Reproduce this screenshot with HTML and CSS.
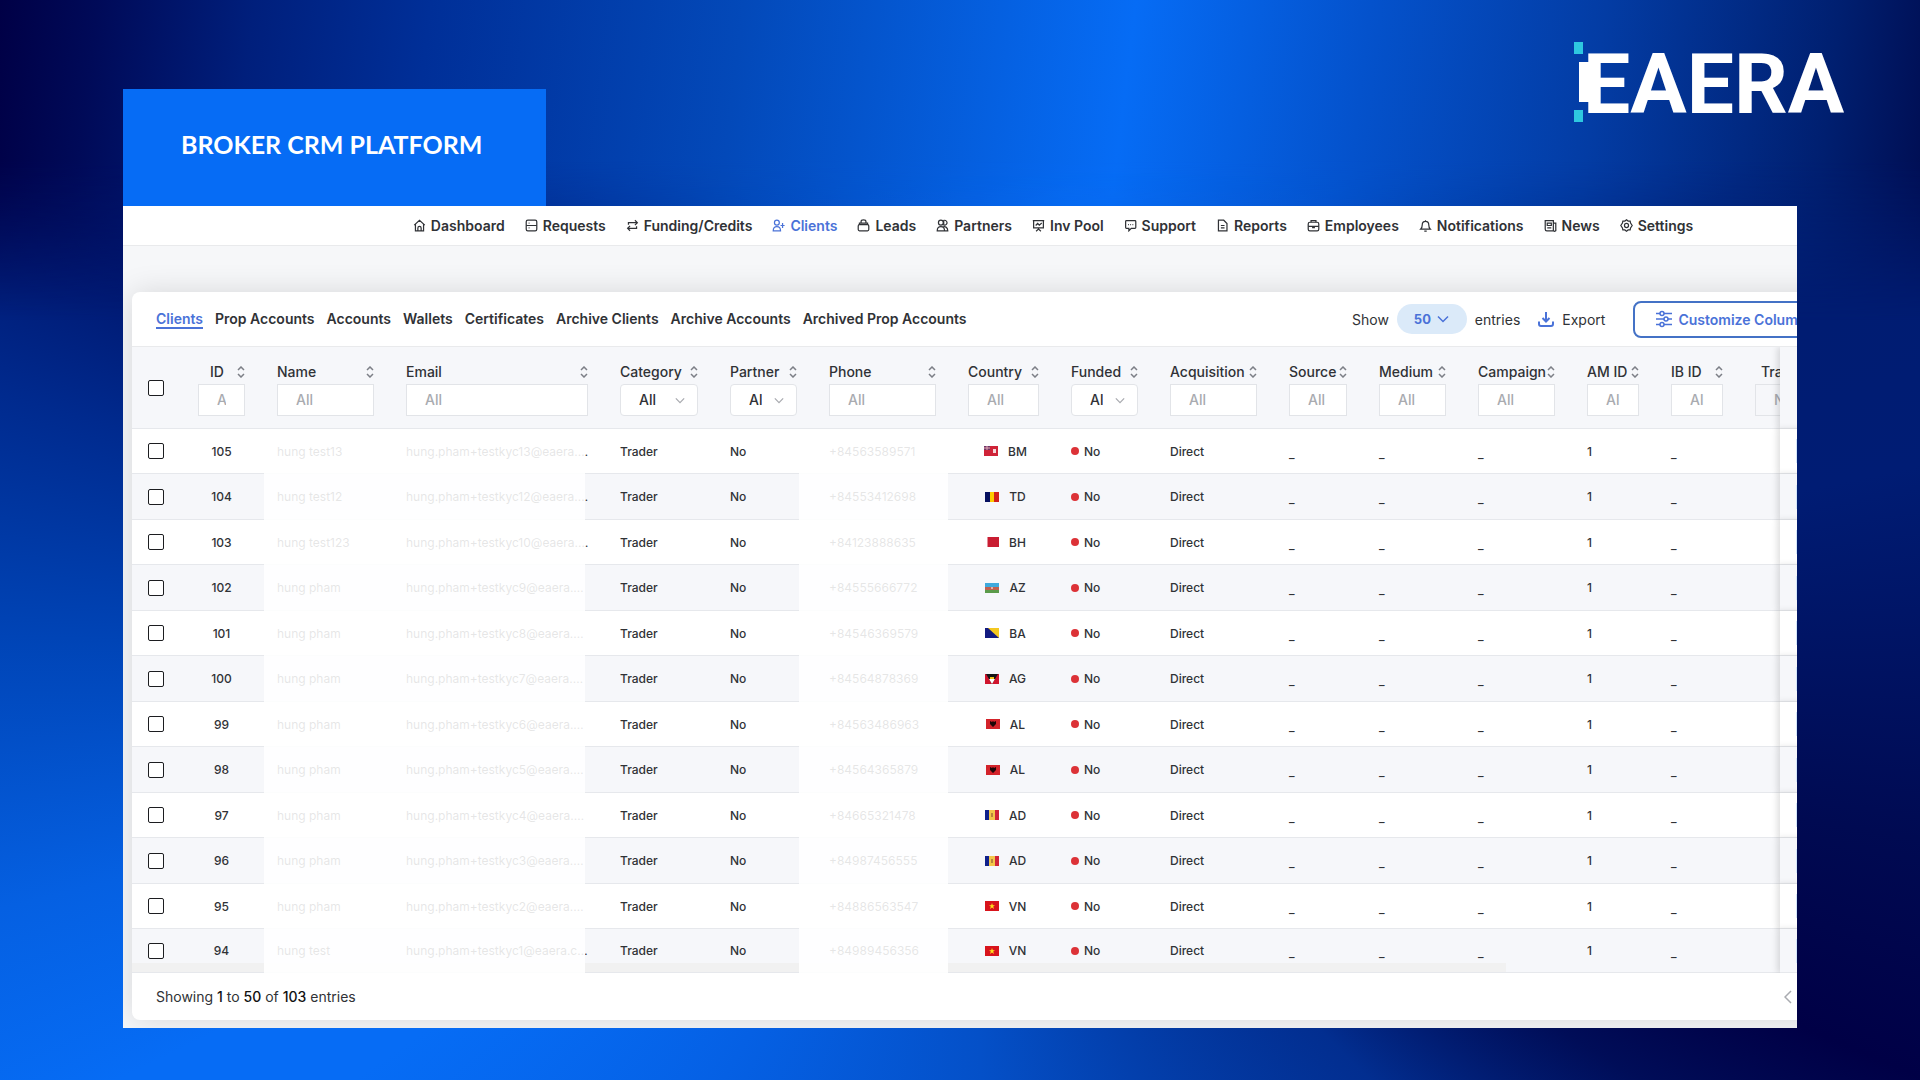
FILE: index.html
```html
<!DOCTYPE html>
<html lang="en">
<head>
    <meta charset="UTF-8">
    <meta name="viewport" content="width=device-width, initial-scale=1.0">
    <title>Broker CRM Platform</title>
    <link rel="stylesheet" href="styles.css">
</head>
<body>
    <!-- Icon sprite -->
    <svg class="sprite" aria-hidden="true">
        <symbol id="i-home" viewBox="0 0 16 16"><path d="M1.5 7.5 8 1.5l6.500 6M3 6.500v8h10v-8M6 14.500v-3.500a2 2 0 0 1 4 0v3.500"/></symbol>
        <symbol id="i-requests" viewBox="0 0 16 16"><rect x="1.500" y="1.500" width="13" height="13" rx="2"/><path d="M1.500 8h13M4.500 5h1M4.500 11h1"/></symbol>
        <symbol id="i-funding" viewBox="0 0 16 16"><path d="M3 7V4.500h11M11 1.500l3 3-3 3M13 9v2.500H2M5 8.500l-3 3 3 3"/></symbol>
        <symbol id="i-clients" viewBox="0 0 16 16"><circle cx="6" cy="4.500" r="3"/><path d="M6 9.500c-3 0-4.500 1.500-4.500 5h9c0-3.500-1.500-5-4.500-5zM13 5v6M10.500 8h5"/></symbol>
        <symbol id="i-leads" viewBox="0 0 16 16"><rect x="1.500" y="7" width="13" height="7.500" rx="1.500"/><path d="M3 7V5h10v2M5 5V3a3 2 0 0 1 6 0v2"/></symbol>
        <symbol id="i-partners" viewBox="0 0 16 16"><circle cx="6" cy="4.500" r="3"/><path d="M9 2a3 3 0 1 1 1 5.500M1.500 14.500c0-3 1.500-5 4.500-5s4.500 2 4.500 5zM8 10c3-1.500 6.500 0 6.500 4.500h-4M9.500 2v6"/></symbol>
        <symbol id="i-pool" viewBox="0 0 16 16"><path d="M1 2h14M2 2v9h12V2M8 11v2M5 15l3-2.500 3 2.500M4.500 8l2.500-2.500 2 2L12 5"/></symbol>
        <symbol id="i-support" viewBox="0 0 16 16"><path d="M3 2h10.500a1 1 0 0 1 1 1v7.500a1 1 0 0 1-1 1H9l-3 3v-3H3a1 1 0 0 1-1-1V3a1 1 0 0 1 1-1zM5 6.800h1M7.700 6.800h1M10.400 6.800h1"/></symbol>
        <symbol id="i-reports" viewBox="0 0 16 16"><path d="M3 1.500h6.500l4 4v9H3zM6 8h4.500M6 11h4.500"/></symbol>
        <symbol id="i-employees" viewBox="0 0 16 16"><rect x="1.500" y="4" width="13" height="10.500" rx="2"/><path d="M5 4V2h6v2M1.500 9h13M7 9v1.500h2V9"/></symbol>
        <symbol id="i-bell" viewBox="0 0 16 16"><path d="M2 12.500c2-2 2-3 2-5.500a4 4 0 0 1 8 0c0 2.500 0 3.500 2 5.500zM6.500 15h3M8 1.500V3"/></symbol>
        <symbol id="i-news" viewBox="0 0 16 16"><path d="M1.500 2h10v12.500h-8a2 2 0 0 1-2-2zM11.500 5h3v8a1.500 1.500 0 0 1-3 1M4 5h5v3H4zM4 11h5"/></symbol>
        <symbol id="i-settings" viewBox="0 0 16 16"><path d="M8 1l2 1.500 2.500 0 .500 2.500L15 8l-2 3-.500 2.500-2.500 0L8 15l-2-1.500-2.500 0L3 11 1 8l2-3 .500-2.500 2.500 0z"/><circle cx="8" cy="8" r="2.500"/></symbol>
        <symbol id="i-down" viewBox="0 0 12 8"><path d="M1 1.500l5 5 5-5"/></symbol>
        <symbol id="i-left" viewBox="0 0 8 14"><path d="M7 1L1 7l6 6"/></symbol>
        <symbol id="i-sort" viewBox="0 0 8 12"><path d="M1 4l3-3 3 3M1 8l3 3 3-3"/></symbol>
        <symbol id="i-export" viewBox="0 0 16 16"><path d="M8 1v9M4.500 7L8 10.500 11.500 7M1 10.500V13a2 2 0 0 0 2 2h10a2 2 0 0 0 2-2v-2.500"/></symbol>
        <symbol id="i-sliders" viewBox="0 0 18 18"><path d="M1 3.500h4M9 3.500h8M1 9h8M13 9h4M1 14.500h4M9 14.500h8"/><circle cx="7" cy="3.500" r="2"/><circle cx="11" cy="9" r="2"/><circle cx="7" cy="14.500" r="2"/></symbol>

        <!-- Flags -->
        <symbol id="f-BM" viewBox="0 0 14 10"><path fill="#cf2338" d="M0 0h14v10H0z"/><path fill="#6d3566" d="M0 0h6v4H0z"/><path stroke="#e8a9b4" stroke-width="1" d="M3 0v4M0 2h6"/><path fill="#f3d7da" d="M9 3h3v4H9z"/></symbol>
        <symbol id="f-TD" viewBox="0 0 14 10"><path fill="#06105f" d="M0 0h5v10H0z"/><path fill="#fecb00" d="M5 0h4v10H5z"/><path fill="#d2201c" d="M9 0h5v10H9z"/></symbol>
        <symbol id="f-BH" viewBox="0 0 14 10"><path fill="#c91d32" d="M2 0h12v10H2l1-1-1-1 1-1-1-1 1-1-1-1 1-1-1-1 1-1z"/></symbol>
        <symbol id="f-AZ" viewBox="0 0 14 10"><path fill="#3fa9dc" d="M0 0h14v4H0z"/><path fill="#c0604f" d="M0 4h14v3H0z"/><path fill="#5b9b4a" d="M0 7h14v3H0z"/><circle cx="7" cy="5" r="1" fill="#f2c9c0"/></symbol>
        <symbol id="f-BA" viewBox="0 0 14 10"><path fill="#121a80" d="M0 0h14v10H0z"/><path fill="#f4c820" d="M3 0h11v10z"/></symbol>
        <symbol id="f-AG" viewBox="0 0 14 10"><path fill="#d0152d" d="M0 0h14v10H0z"/><path fill="#151515" d="M1 0h12L7 10z"/><path fill="#fff" d="M4 5h6l-3 5z"/><path fill="#f0c419" d="M5 3h4v2H5z"/></symbol>
        <symbol id="f-AL" viewBox="0 0 14 10"><path fill="#d3232a" d="M0 0h14v10H0z"/><path fill="#1d0507" d="M4 2l2 1 1-1 1 1 2-1v3L7 8 4 5z"/></symbol>
        <symbol id="f-AD" viewBox="0 0 14 10"><path fill="#10218b" d="M0 0h4v10H0z"/><path fill="#f3c64a" d="M4 0h6v10H4z"/><path fill="#cf2338" d="M10 0h4v10h-4z"/><path fill="#b9853c" d="M6 3h2v4H6z"/></symbol>
        <symbol id="f-VN" viewBox="0 0 14 10"><path fill="#d8141c" d="M0 0h14v10H0z"/><path fill="#ffe21c" d="M7 2l.800 2.200H10L8.200 5.500 9 8 7 6.500 5 8l.800-2.500L4 4.200h2.200z"/></symbol>
    </svg>

    <!-- Banner -->
    <header class="banner">
        <h1>BROKER CRM PLATFORM</h1>
        <svg class="logo" viewBox="0 0 268 80" role="img" aria-label="EAERA">
            <rect class="accent" x="0" y="0" width="9" height="12"/>
            <rect class="accent" x="0" y="68" width="9" height="12"/>
            <rect x="5" y="20" width="12" height="40"/>
            <text x="9" y="71">EAERA</text>
        </svg>
    </header>

    <!-- CRM window -->
    <main class="frame">
        <div class="app">
            <nav class="main-nav">
                <a href="#"><svg><use href="#i-home"/></svg>Dashboard</a>
                <a href="#"><svg><use href="#i-requests"/></svg>Requests</a>
                <a href="#"><svg><use href="#i-funding"/></svg>Funding/Credits</a>
                <a href="#" class="active"><svg><use href="#i-clients"/></svg>Clients</a>
                <a href="#"><svg><use href="#i-leads"/></svg>Leads</a>
                <a href="#"><svg><use href="#i-partners"/></svg>Partners</a>
                <a href="#"><svg><use href="#i-pool"/></svg>Inv Pool</a>
                <a href="#"><svg><use href="#i-support"/></svg>Support</a>
                <a href="#"><svg><use href="#i-reports"/></svg>Reports</a>
                <a href="#"><svg><use href="#i-employees"/></svg>Employees</a>
                <a href="#"><svg><use href="#i-bell"/></svg>Notifications</a>
                <a href="#"><svg><use href="#i-news"/></svg>News</a>
                <a href="#"><svg><use href="#i-settings"/></svg>Settings</a>
            </nav>

            <section class="card">
                <div class="toolbar">
                    <nav class="tabs">
                        <a href="#" class="active">Clients</a>
                        <a href="#">Prop Accounts</a>
                        <a href="#">Accounts</a>
                        <a href="#">Wallets</a>
                        <a href="#">Certificates</a>
                        <a href="#">Archive Clients</a>
                        <a href="#">Archive Accounts</a>
                        <a href="#">Archived Prop Accounts</a>
                    </nav>
                    <div class="tools">
                        <label for="pageSize">Show</label>
                        <span class="page-size">
                            <select id="pageSize"><option>50</option><option>100</option></select>
                            <svg><use href="#i-down"/></svg>
                        </span>
                        <span>entries</span>
                        <button class="export"><svg><use href="#i-export"/></svg>Export</button>
                        <button class="customize"><svg><use href="#i-sliders"/></svg>Customize Columns</button>
                    </div>
                </div>

                <div class="table-wrap">
                    <table>
                        <colgroup>
                            <col class="w-check"><col class="w-id"><col class="w-name"><col class="w-email">
                            <col class="w-category"><col class="w-partner"><col class="w-phone"><col class="w-country">
                            <col class="w-funded"><col class="w-acquisition"><col class="w-source"><col class="w-medium">
                            <col class="w-campaign"><col class="w-manager"><col class="w-manager"><col class="w-trading">
                            <col class="w-actions">
                        </colgroup>
                        <thead>
                            <tr>
                                <th class="check"><input type="checkbox" aria-label="Select all"></th>
                                <th class="center"><div class="th-label">ID<svg><use href="#i-sort"/></svg></div><input type="text" placeholder="All" aria-label="ID"></th>
                                <th><div class="th-label">Name<svg><use href="#i-sort"/></svg></div><input type="text" placeholder="All" aria-label="Name"></th>
                                <th><div class="th-label">Email<svg><use href="#i-sort"/></svg></div><input type="text" placeholder="All" aria-label="Email"></th>
                                <th><div class="th-label">Category<svg><use href="#i-sort"/></svg></div><div class="filter"><select aria-label="Category"><option>All</option></select><svg><use href="#i-down"/></svg></div></th>
                                <th><div class="th-label">Partner<svg><use href="#i-sort"/></svg></div><div class="filter"><select aria-label="Partner"><option>All</option></select><svg><use href="#i-down"/></svg></div></th>
                                <th><div class="th-label">Phone<svg><use href="#i-sort"/></svg></div><input type="text" placeholder="All" aria-label="Phone"></th>
                                <th><div class="th-label">Country<svg><use href="#i-sort"/></svg></div><input type="text" placeholder="All" aria-label="Country"></th>
                                <th><div class="th-label">Funded<svg><use href="#i-sort"/></svg></div><div class="filter"><select aria-label="Funded"><option>All</option></select><svg><use href="#i-down"/></svg></div></th>
                                <th><div class="th-label">Acquisition<svg><use href="#i-sort"/></svg></div><input type="text" placeholder="All" aria-label="Acquisition"></th>
                                <th><div class="th-label">Source<svg><use href="#i-sort"/></svg></div><input type="text" placeholder="All" aria-label="Source"></th>
                                <th><div class="th-label">Medium<svg><use href="#i-sort"/></svg></div><input type="text" placeholder="All" aria-label="Medium"></th>
                                <th><div class="th-label">Campaign<svg><use href="#i-sort"/></svg></div><input type="text" placeholder="All" aria-label="Campaign"></th>
                                <th><div class="th-label">AM ID<svg><use href="#i-sort"/></svg></div><input type="text" placeholder="All" aria-label="AM ID"></th>
                                <th><div class="th-label">IB ID<svg><use href="#i-sort"/></svg></div><input type="text" placeholder="All" aria-label="IB ID"></th>
                                <th class="trading"><div class="th-label">Trading<svg><use href="#i-sort"/></svg></div><input type="text" placeholder="No" aria-label="Trading" disabled></th>
                                <th class="actions"></th>
                            </tr>
                        </thead>
                        <tbody id="clientRows"></tbody>
                    </table>
                    <div class="scrollbar"></div>
                    <div class="mask mask-contact"></div>
                    <div class="mask mask-phone"></div>
                </div>

                <footer class="card-footer">
                    <p>Showing <b>1</b> to <b>50</b> of <b>103</b> entries</p>
                    <div class="pager"><button aria-label="Previous page"><svg><use href="#i-left"/></svg></button></div>
                </footer>
            </section>
        </div>
    </main>

    <script src="script.js"></script>
</body>
</html>
```
FILE: styles.css
```css
* {
    box-sizing: border-box;
}

body {
    position: relative;
    z-index: 0;
    margin: 0;
    min-height: 100vh;
    font-family: Inter, "Liberation Sans", sans-serif;
    font-size: 14px;
    color: #303236;
    background: conic-gradient(at 50% 62%,
        #0561e6 0deg, #066cf5 13deg, #0452cc 38deg, #033ca4 46deg, #001c70 58deg,
        #001c74 78deg, #000a52 100deg, #000046 113deg, #000d58 121deg, #022e90 135deg,
        #0450c8 177deg, #0560e4 210deg, #066cf5 236deg, #066cf5 244deg, #0560e2 256deg,
        #0044b6 272deg, #002a8e 286deg, #00146a 297deg, #000e60 304deg, #001a72 314deg,
        #0344b4 336deg, #0561e6 360deg);
}

/* Lighter sweep behind the banner, fading into the page background */
body::before {
    content: "";
    position: absolute;
    top: 0;
    left: 0;
    right: 0;
    z-index: -1;
    height: 320px;
    background: linear-gradient(97deg,
        #000046 0%, #000a58 5%, #001f7c 13%, #002f98 22%, #0349b9 38%, #066cf5 58%,
        #0452cc 70%, #033ca4 82%, #001f70 94%, #000c50 100%);
    mask-image: linear-gradient(#000 50%, transparent);
}

a {
    color: inherit;
    text-decoration: none;
}

button,
input,
select {
    font: inherit;
    color: inherit;
    margin: 0;
}

button {
    display: flex;
    align-items: center;
    padding: 0;
    border: none;
    background: none;
    cursor: pointer;
}

svg {
    flex: none;
    fill: none;
    stroke: currentColor;
    stroke-width: 1.5;
}

.sprite {
    position: absolute;
    width: 0;
    height: 0;
}

/* Banner */
.banner {
    display: flex;
    justify-content: space-between;
    align-items: flex-end;
    padding: 42px 78px 0 123px;
}

.banner h1 {
    margin: 47px 0 0;
    padding: 0 64px 6px 58px;
    font-family: Lato, sans-serif;
    font-size: 25px;
    font-weight: 700;
    line-height: 111px;
    color: #fff;
    background-color: #066cf5;
}

.logo {
    align-self: flex-start;
    width: 268px;
    height: 80px;
    overflow: visible;
    fill: #fff;
    stroke: none;
}

.logo text {
    font-family: Roboto, sans-serif;
    font-size: 84px;
    font-weight: 700;
}

.logo .accent {
    fill: #2ec8e0;
}

/* CRM window */
.frame {
    margin: 0 123px 51px;
    overflow: hidden;
    background-color: #f6f7f9;
}

.app {
    width: calc(100% + 186px);
    padding-bottom: 8px;
}

.main-nav {
    display: flex;
    justify-content: center;
    align-items: center;
    gap: 20px;
    height: 40px;
    background-color: #fff;
    border-bottom: 1px solid #e9eaec;
    font-weight: 600;
}

.main-nav a {
    display: flex;
    align-items: center;
    gap: 5px;
}

.main-nav svg {
    width: 13px;
    height: 13px;
}

.active {
    color: #4a72d8;
}

.card {
    margin: 46px 9px 0;
    background-color: #fff;
    border-radius: 8px;
    box-shadow: 0 0 30px rgba(0, 0, 0, 0.13);
}

/* Toolbar */
.toolbar {
    display: flex;
    justify-content: space-between;
    align-items: center;
    height: 55px;
    padding: 0 138px 0 24px;
    border-bottom: 1px solid #e9eaec;
}

.tabs {
    display: flex;
    gap: 12px;
    font-weight: 600;
}

.tabs .active {
    border-bottom: 2px solid #4a72d8;
}

.tools {
    display: flex;
    align-items: center;
    gap: 8px;
}

.page-size {
    position: relative;
    color: #4a72d8;
}

.page-size select {
    width: 70px;
    height: 30px;
    padding: 0 17px;
    border: none;
    border-radius: 15px;
    background-color: #dbeaf9;
    font-size: 13px;
    font-weight: 700;
    appearance: none;
}

.page-size svg {
    position: absolute;
    top: 11px;
    right: 18px;
    width: 12px;
    height: 8px;
}

.export {
    gap: 8px;
    margin: 0 20px 0 10px;
}

.export svg {
    width: 16px;
    height: 16px;
    color: #4a72d8;
    stroke-width: 2;
}

.customize {
    gap: 5px;
    height: 37px;
    padding: 0 20px;
    border: 2px solid #4472c6;
    border-radius: 8px;
    color: #4a72d8;
    font-weight: 600;
}

.customize svg {
    width: 18px;
    height: 18px;
}

/* Table */
.table-wrap {
    position: relative;
    overflow: hidden;
}

table {
    width: 1912px;
    min-width: 100%;
    table-layout: fixed;
    border-collapse: separate;
    border-spacing: 0;
}

.w-check { width: 50px; }
.w-id { width: 79px; }
.w-name { width: 129px; }
.w-email { width: 214px; }
.w-category { width: 110px; }
.w-partner { width: 99px; }
.w-phone { width: 139px; }
.w-country { width: 103px; }
.w-funded { width: 99px; }
.w-acquisition { width: 119px; }
.w-source { width: 90px; }
.w-medium { width: 99px; }
.w-campaign { width: 109px; }
.w-manager { width: 84px; }
.w-trading { width: 112px; }
.w-actions { width: 194px; }

th,
td {
    padding: 0 16px;
    border-bottom: 1px solid #e6e8ec;
    text-align: left;
    overflow: hidden;
    white-space: nowrap;
    text-overflow: ellipsis;
}

th {
    height: 82px;
    background-color: #f6f7fa;
    font-weight: 500;
}

.th-label {
    display: flex;
    justify-content: space-between;
    align-items: center;
    height: 24px;
}

.center .th-label {
    padding-left: 12px;
}

.trading .th-label {
    padding-left: 6px;
}

.th-label svg {
    width: 8px;
    height: 12px;
    color: #7c7f86;
}

th input[type="text"],
.filter select {
    display: block;
    width: 100%;
    height: 32px;
    padding: 0 18px;
    border: 1px solid #e2e4e8;
    background-color: #fff;
}

th input::placeholder {
    color: #a9abb0;
    opacity: 1;
}

th input:disabled {
    background-color: #f6f7fa;
}

.filter {
    position: relative;
}

.filter select {
    padding-right: 34px;
    border-radius: 4px;
    appearance: none;
}

.filter svg {
    position: absolute;
    top: 13px;
    right: 13px;
    width: 10px;
    height: 7px;
    color: #a9abb0;
}

input[type="checkbox"] {
    display: block;
    width: 16px;
    height: 16px;
    border: 1px solid #1c1d20;
    border-radius: 2px;
    background-color: #fff;
    appearance: none;
}

td {
    height: 45px;
    background-color: #fff;
    font-size: 12px;
    font-weight: 500;
}

tr:nth-child(even) td {
    height: 46px;
    background-color: #f6f7fa;
}

tbody tr:last-child td {
    height: 44px;
}

td.center {
    text-align: center;
}

td.contact {
    padding-right: 15px;
    font-weight: 400;
}

td.empty {
    padding-top: 4px;
}

.country,
.funded {
    display: flex;
    align-items: center;
    justify-content: center;
    gap: 10px;
}

.country {
    padding-left: 4px;
}

.country svg {
    width: 14px;
    height: 10px;
    stroke: none;
}

.funded {
    justify-content: flex-start;
    gap: 5px;
}

.funded::before {
    content: "";
    width: 8px;
    height: 8px;
    border-radius: 50%;
    background-color: #dc3237;
}

.actions {
    position: sticky;
    right: 0;
    box-shadow: -3px 0 6px rgba(0, 0, 0, 0.12);
}

.actions button {
    width: 24px;
    height: 24px;
    background-color: #d3e6fb;
}

.mask {
    position: absolute;
    top: 82px;
    bottom: 0;
    background-color: rgba(255, 255, 255, 0.88);
}

.mask-contact {
    left: 132px;
    width: 321px;
}

.mask-phone {
    left: 667px;
    width: 149px;
}

.scrollbar {
    position: absolute;
    left: 0;
    bottom: 1px;
    width: 1374px;
    height: 9px;
    background-color: #f1f1f1;
}

/* Footer */
.card-footer {
    display: flex;
    justify-content: space-between;
    align-items: center;
    height: 47px;
    padding-left: 24px;
}

.card-footer p {
    margin: 0;
}

.card-footer b {
    font-weight: 500;
    color: #111;
}

.pager {
    width: 190px;
    color: #a9abb0;
}

.pager svg {
    width: 8px;
    height: 14px;
}
```
FILE: script.js
```js
const clients = [
    [105, "hung test13", "hung.pham+testkyc13@eaera.com", "+84563589571", "BM"],
    [104, "hung test12", "hung.pham+testkyc12@eaera.com", "+84553412698", "TD"],
    [103, "hung test123", "hung.pham+testkyc10@eaera.com", "+84123888635", "BH"],
    [102, "hung pham", "hung.pham+testkyc9@eaera.com", "+84555666772", "AZ"],
    [101, "hung pham", "hung.pham+testkyc8@eaera.com", "+84546369579", "BA"],
    [100, "hung pham", "hung.pham+testkyc7@eaera.com", "+84564878369", "AG"],
    [99, "hung pham", "hung.pham+testkyc6@eaera.com", "+84563486963", "AL"],
    [98, "hung pham", "hung.pham+testkyc5@eaera.com", "+84564365879", "AL"],
    [97, "hung pham", "hung.pham+testkyc4@eaera.com", "+84665321478", "AD"],
    [96, "hung pham", "hung.pham+testkyc3@eaera.com", "+84987456555", "AD"],
    [95, "hung pham", "hung.pham+testkyc2@eaera.com", "+84886563547", "VN"],
    [94, "hung test", "hung.pham+testkyc1@eaera.com", "+84989456356", "VN"]
];

document.getElementById("clientRows").innerHTML = clients.map(([id, name, email, phone, country]) => `
    <tr>
        <td class="check"><input type="checkbox" aria-label="Select client ${id}"></td>
        <td class="center">${id}</td>
        <td class="contact">${name}</td>
        <td class="contact">${email}</td>
        <td>Trader</td>
        <td>No</td>
        <td class="contact">${phone}</td>
        <td><div class="country"><svg><use href="#f-${country}"/></svg>${country}</div></td>
        <td><div class="funded">No</div></td>
        <td>Direct</td>
        <td class="empty">_</td>
        <td class="empty">_</td>
        <td class="empty">_</td>
        <td>1</td>
        <td class="empty">_</td>
        <td></td>
        <td class="actions"><button aria-label="Edit client ${id}"></button></td>
    </tr>`).join("");
```
